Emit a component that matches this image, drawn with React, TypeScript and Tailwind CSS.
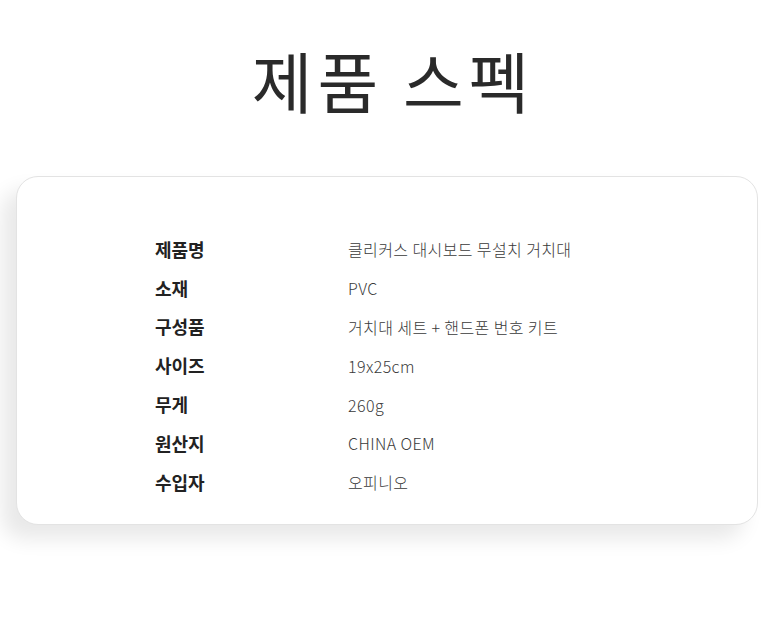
const SPECS: [string, string][] = [
  ["제품명", "클리커스 대시보드 무설치 거치대"],
  ["소재", "PVC"],
  ["구성품", "거치대 세트 + 핸드폰 번호 키트"],
  ["사이즈", "19x25cm"],
  ["무게", "260g"],
  ["원산지", "CHINA OEM"],
  ["수입자", "오피니오"],
];

export default function App() {
  return (
    <div className="h-[624px] w-[780px] overflow-hidden bg-white font-['Noto_Sans_CJK_KR','Noto_Sans',sans-serif]">
      <h1 className="pl-[6px] pt-[34px] text-center text-[66px] font-normal leading-[90px] tracking-[5px] text-[#2a2a2a]">
        제품 스펙
      </h1>
      <div className="ml-4 mt-[52px] w-[742px] rounded-[22px] border border-[#e3e3e3] bg-white pb-[22px] pl-[138px] pt-[53px] shadow-[-14px_14px_20px_rgba(0,0,0,0.09)]">
        {SPECS.map(([label, value]) => (
          <div key={label} className="flex h-[38.8px] items-center">
            <div className="w-[193px] text-[18px] font-bold text-[#222]">{label}</div>
            <div className="text-[16px] font-light tracking-[0.4px] text-[#3a3a3a]">{value}</div>
          </div>
        ))}
      </div>
    </div>
  );
}
